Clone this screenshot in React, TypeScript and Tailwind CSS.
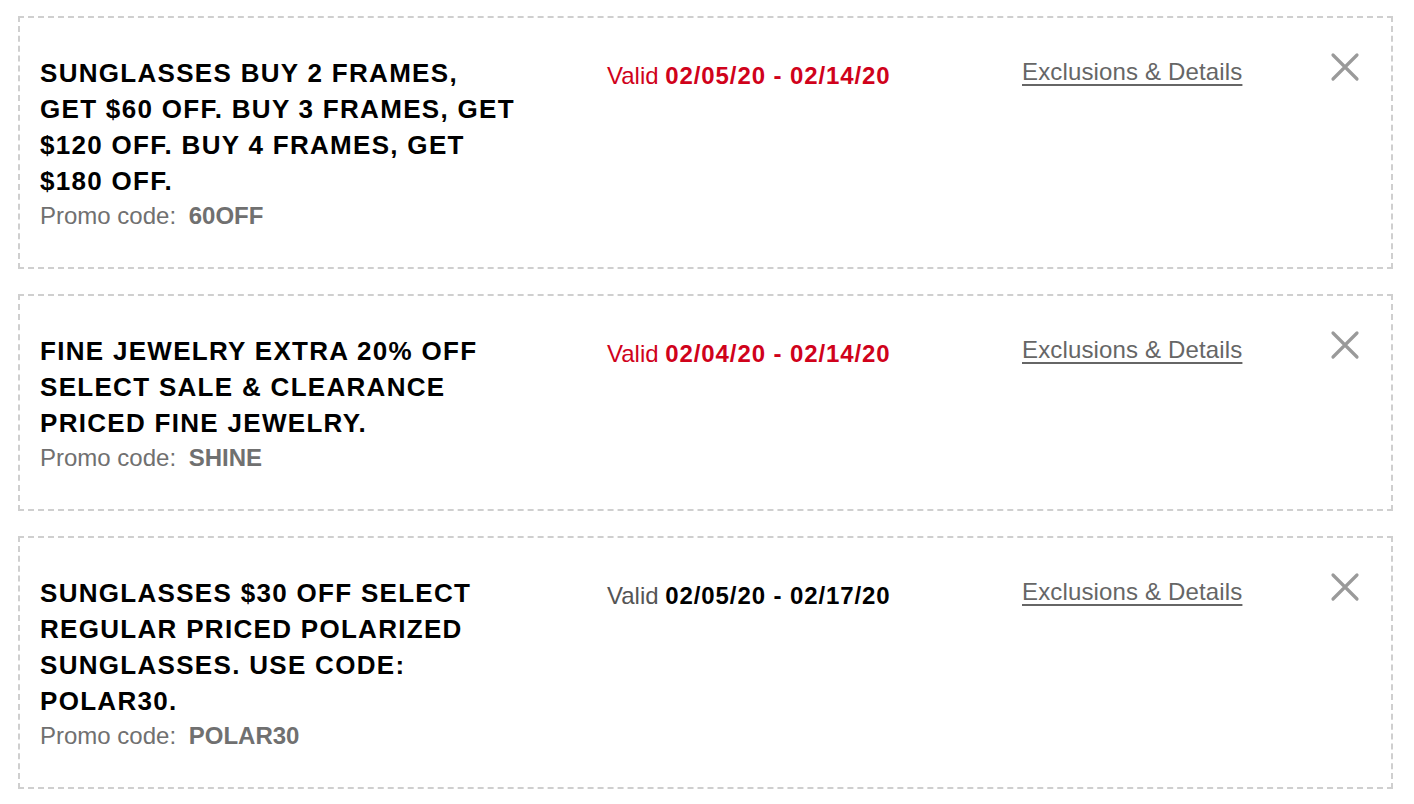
const offers = [
  {
    title: "SUNGLASSES BUY 2 FRAMES, GET $60 OFF. BUY 3 FRAMES, GET $120 OFF. BUY 4 FRAMES, GET $180 OFF.",
    code: "60OFF",
    from: "02/05/20",
    to: "02/14/20",
    urgent: true,
  },
  {
    title: "FINE JEWELRY EXTRA 20% OFF SELECT SALE & CLEARANCE PRICED FINE JEWELRY.",
    code: "SHINE",
    from: "02/04/20",
    to: "02/14/20",
    urgent: true,
  },
  {
    title: "SUNGLASSES $30 OFF SELECT REGULAR PRICED POLARIZED SUNGLASSES. USE CODE: POLAR30.",
    code: "POLAR30",
    from: "02/05/20",
    to: "02/17/20",
    urgent: false,
  },
];

function CloseIcon() {
  return (
    <svg width="30" height="30" viewBox="0 0 30 30" fill="none">
      <path
        d="M3 3 L27 27 M27 3 L3 27"
        stroke="#9a9a9a"
        strokeWidth="3.2"
        strokeLinecap="round"
      />
    </svg>
  );
}

export default function App() {
  return (
    <div
      className="bg-white min-h-screen pt-[16px] pl-[18px] pr-[21px] flex flex-col gap-[25px]"
      style={{ fontFamily: "'Liberation Sans', Arial, sans-serif" }}
    >
      {offers.map((offer) => (
        <div
          key={offer.code}
          className="border-2 border-dashed border-[#cfcfcf] pt-[37px] pb-[34px] pl-[20px] flex"
        >
          <div className="w-[567px] shrink-0">
            <h3 className="w-[482px] text-[26px] leading-[36px] font-bold tracking-[1.3px] text-black">
              {offer.title}
            </h3>
            <p className="text-[24px] leading-[34px] text-[#707070]">
              Promo code:{" "}
              <span className="ml-[6px] font-bold">{offer.code}</span>
            </p>
          </div>

          <div
            className={
              offer.urgent
                ? "w-[415px] shrink-0 pt-[4px] text-[24px] leading-[34px] text-[#d0021b]"
                : "w-[415px] shrink-0 pt-[4px] text-[24px] leading-[34px] text-[#555555]"
            }
          >
            Valid{" "}
            <span
              className={
                offer.urgent
                  ? "font-bold tracking-[0.9px] text-[#d0021b]"
                  : "font-bold tracking-[0.9px] text-black"
              }
            >
              {offer.from} - {offer.to}
            </span>
          </div>

          <div className="flex-1 flex justify-between items-start">
            <a
              href="#"
              className="text-[24px] leading-[34px] tracking-[0.15px] text-[#666666] underline underline-offset-[4px]"
            >
              Exclusions &amp; Details
            </a>
            <button className="mr-[31px] mt-[-3px]">
              <CloseIcon />
            </button>
          </div>
        </div>
      ))}
    </div>
  );
}
